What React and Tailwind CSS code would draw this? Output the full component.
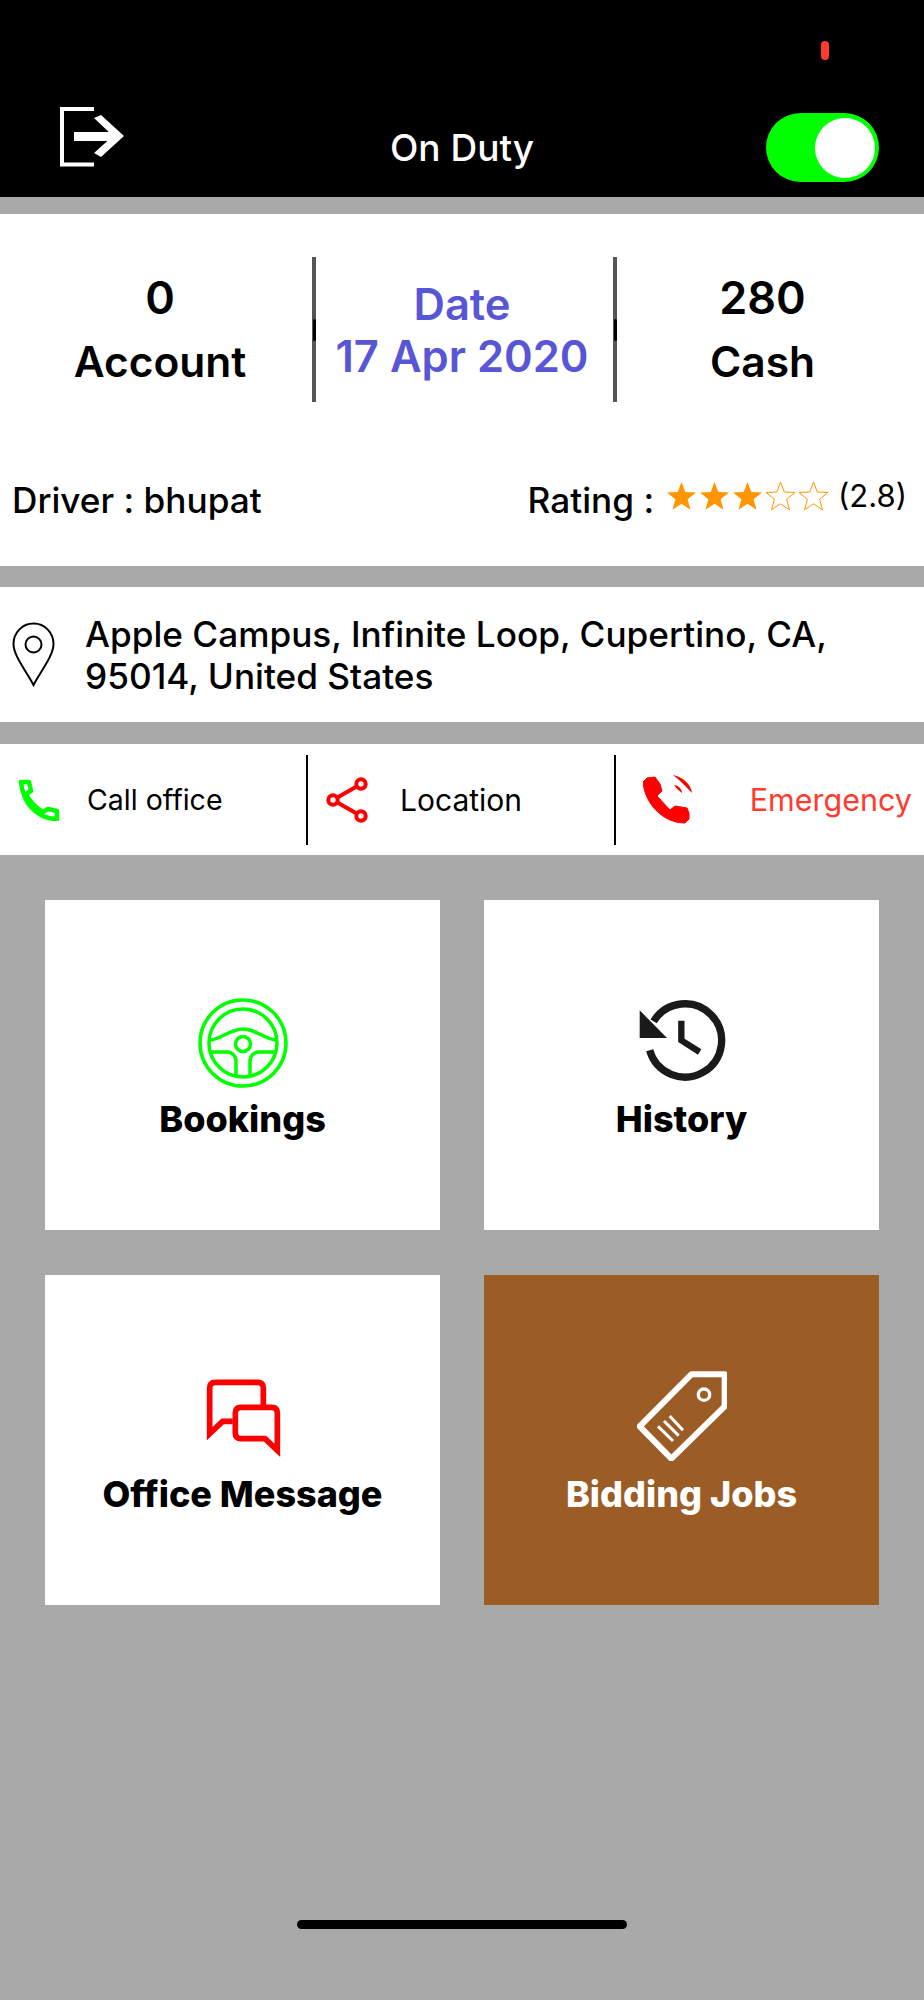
const font = { fontFamily: 'Inter, "Liberation Sans", sans-serif' }

const Star = ({ filled }) => (
  <svg width="33" height="30" viewBox="0 0 33 30">
    <polygon
      points="16.5,1 20.3,11 31,11.5 22.6,18.2 25.5,28.8 16.5,22.8 7.5,28.8 10.4,18.2 2,11.5 12.7,11"
      fill={filled ? '#ff9500' : 'none'}
      stroke="#ff9500"
      strokeWidth={filled ? 0 : 1}
    />
  </svg>
)

const Stat = ({ value, label, className }) => (
  <div className={`flex flex-col items-center text-black font-semibold ${className}`}>
    <span className="text-[45px] leading-[65px]">{value}</span>
    <span className="-mt-[1px] text-[42.5px] leading-[65px]">{label}</span>
  </div>
)

const Divider = () => (
  <div className="w-[4px] h-[145px] bg-[#555555] flex items-center justify-center">
    <div className="w-[3px] h-[22px] rounded-full bg-black" />
  </div>
)

const ActionDivider = () => <div className="w-[2px] h-[90px] bg-black" />

const Card = ({ title, dark, iconClass, children }) => (
  <div className={`h-[330px] flex flex-col items-center ${dark ? 'bg-[#9c5c25] text-white' : 'bg-white text-black'}`}>
    <div className={`h-[194px] ${iconClass}`}>{children}</div>
    <span className="text-[36px] leading-[50px] font-extrabold">{title}</span>
  </div>
)

export default function App() {
  return (
    <div style={font} className="min-h-[2000px] bg-[#a9a9a9] flex flex-col">
      {/* Header */}
      <header className="relative h-[197px] bg-black grid grid-cols-[1fr_auto_1fr] items-start px-[45px] pt-[107px] text-white">
        <svg width="66" height="60" viewBox="0 0 66 60" className="ml-[15px]">
          <path d="M34 2H2V57.5H34" fill="none" stroke="#fff" strokeWidth="4" />
          <rect x="14" y="25" width="44" height="9" fill="#fff" />
          <polygon points="34,11 41,8 64,29 41,50 34,46 53,29" fill="#fff" />
        </svg>
        <span className="mt-[19px] text-[37px] leading-[44px] font-medium">On Duty</span>
        <div className="justify-self-end mt-[6px] w-[113px] h-[69px] rounded-full bg-[#00ff00] flex items-center justify-end pr-[4px]">
          <div className="w-[60px] h-[60px] rounded-full bg-white" />
        </div>
        <div className="absolute left-[821px] top-[41px] w-[8px] h-[19px] rounded-full bg-[#ff3b30]" />
      </header>

      {/* Stats and driver */}
      <section className="mt-[17px] h-[352px] bg-white flex flex-col">
        <div className="mt-[43px] h-[145px] flex items-center">
          <Stat value="0" label="Account" className="w-[312px] pl-[8px]" />
          <Divider />
          <div className="w-[297px] pr-[5px] flex flex-col items-center text-[#5856d6] font-semibold text-[43.5px] leading-[52px]">
            <span>Date</span>
            <span>17 Apr 2020</span>
          </div>
          <Divider />
          <Stat value="280" label="Cash" className="w-[307px] pr-[16px]" />
        </div>
        <div className="mt-[77px] flex items-center justify-between pl-[12px] pr-[17px] text-[35.2px] leading-[42px] font-medium text-black">
          <span>Driver : bhupat</span>
          <div className="flex items-center">
            <span>Rating :</span>
            <div className="ml-[11px] flex -mt-[8px]">
              {[1, 1, 1, 0, 0].map((f, i) => <Star key={i} filled={!!f} />)}
            </div>
            <span className="ml-[8px] -mt-[8px] text-[31px] font-normal">(2.8)</span>
          </div>
        </div>
      </section>

      {/* Address */}
      <section className="mt-[21px] h-[135px] bg-white flex items-center pl-[12px]">
        <svg width="43" height="65" viewBox="0 0 43 65" className="shrink-0">
          <path d="M21.5 1.5C10 1.5 1.5 11 1.5 22C1.5 34 15 50 21.5 63C28 50 41.5 34 41.5 22C41.5 11 33 1.5 21.5 1.5Z" fill="none" stroke="#000" strokeWidth="2" />
          <circle cx="21.5" cy="22.5" r="8" fill="none" stroke="#000" strokeWidth="2" />
        </svg>
        <p className="ml-[30px] text-[35.2px] leading-[42px] font-medium text-black">
          Apple Campus, Infinite Loop, Cupertino, CA,<br />95014, United States
        </p>
      </section>

      {/* Actions */}
      <section className="mt-[22px] h-[111px] bg-white flex items-center text-black">
        <div className="w-[306px] flex items-center pl-[18px]">
          <svg width="42" height="42" viewBox="0 0 42 42">
            <path d="M3 3H11L13 12L8 15C12 23 18 29 25 33L30 30L39 32V40C20 40 5 25 3 3Z" fill="none" stroke="#00ff00" strokeWidth="4.5" strokeLinejoin="round" />
          </svg>
          <span className="ml-[27px] mt-[2px] text-[28.5px]">Call office</span>
        </div>
        <ActionDivider />
        <div className="w-[306px] flex items-center pl-[18px]">
          <svg width="44" height="46" viewBox="0 0 44 46">
            <path d="M7 23L35 7M7 23L35 39" fill="none" stroke="#ff0000" strokeWidth="4" />
            <circle cx="7" cy="23" r="4.7" fill="#fff" stroke="#ff0000" strokeWidth="4" />
            <circle cx="35" cy="7" r="4.7" fill="#fff" stroke="#ff0000" strokeWidth="4" />
            <circle cx="35" cy="39" r="4.7" fill="#fff" stroke="#ff0000" strokeWidth="4" />
          </svg>
          <span className="ml-[30px] mt-[2px] text-[30px]">Location</span>
        </div>
        <ActionDivider />
        <div className="flex-1 flex items-center justify-between pl-[27px] pr-[12px]">
          <svg width="50" height="52" viewBox="0 -2 50 52">
            <path d="M0 6L4 2L12 1L17 8L19 15L14 20L27 34L32 30L44 32L46 37V43L42 47C20 47 2 28 0 6Z" fill="#ff0000" stroke="#ff0000" strokeLinejoin="round" />
            <path d="M30 -1C40 1 48 8 49 17C43 11 38 5 30 -1ZM31 9C35 9 39 13 39 17C36 15 33 12 31 9Z" fill="#ff0000" />
          </svg>
          <span className="mt-[1px] text-[30.5px] text-[#ff3b30]">Emergency</span>
        </div>
      </section>

      {/* Menu */}
      <section className="mt-[45px] px-[45px] grid grid-cols-2 gap-x-[44px] gap-y-[45px]">
        <Card title="Bookings" iconClass="pt-[98px]">
          <svg width="90" height="90" viewBox="0 0 90 90" fill="none" stroke="#00ff00" strokeWidth="3.5">
            <circle cx="45" cy="45" r="43" />
            <circle cx="45" cy="45" r="34" />
            <circle cx="45" cy="46" r="7.5" />
            <path d="M12 42C22 42 32 31 45 31C58 31 68 42 78 42" />
            <path d="M12 54H29C34 54 38 58 38 63V78" />
            <path d="M78 54H61C56 54 52 58 52 63V78" />
          </svg>
        </Card>
        <Card title="History" iconClass="pt-[98px]">
          <svg width="90" height="84" viewBox="110 85 270 252" fill="none" stroke="#1a1a1a" strokeWidth="22">
            <path d="M148 242A110 110 0 1 0 160 155" />
            <polygon points="118,122 118,205 200,205" fill="#1a1a1a" stroke="none" />
            <path d="M243 153V212L298 247" strokeWidth="19" />
          </svg>
        </Card>
        <Card title="Office Message" iconClass="pt-[103px]">
          <svg width="76" height="80" viewBox="132 85 228 240" fill="none" stroke="#ff0000" strokeWidth="17">
            <path d="M215 215H185L146 252V115Q146 98 163 98H290Q307 98 307 115V170" />
            <path d="M240 173H332Q349 173 349 190V302L312 267H240Q223 267 223 250V190Q223 173 240 173Z" />
          </svg>
        </Card>
        <Card title="Bidding Jobs" dark iconClass="pt-[96px]">
          <svg width="90" height="90" viewBox="112 62 270 270" fill="none" stroke="#fff">
            <polygon points="275,72 375,72 375,168 215,325 120,228" strokeWidth="18" strokeLinejoin="round" />
            <circle cx="313" cy="133" r="17" strokeWidth="10" />
            <path d="M175 228L220 272M193 212L237 256M210 197L250 240" strokeWidth="9" />
          </svg>
        </Card>
      </section>

      {/* Home indicator */}
      <div className="mt-auto pb-[71px] flex justify-center">
        <div className="w-[330px] h-[9px] rounded-full bg-black" />
      </div>
    </div>
  )
}
